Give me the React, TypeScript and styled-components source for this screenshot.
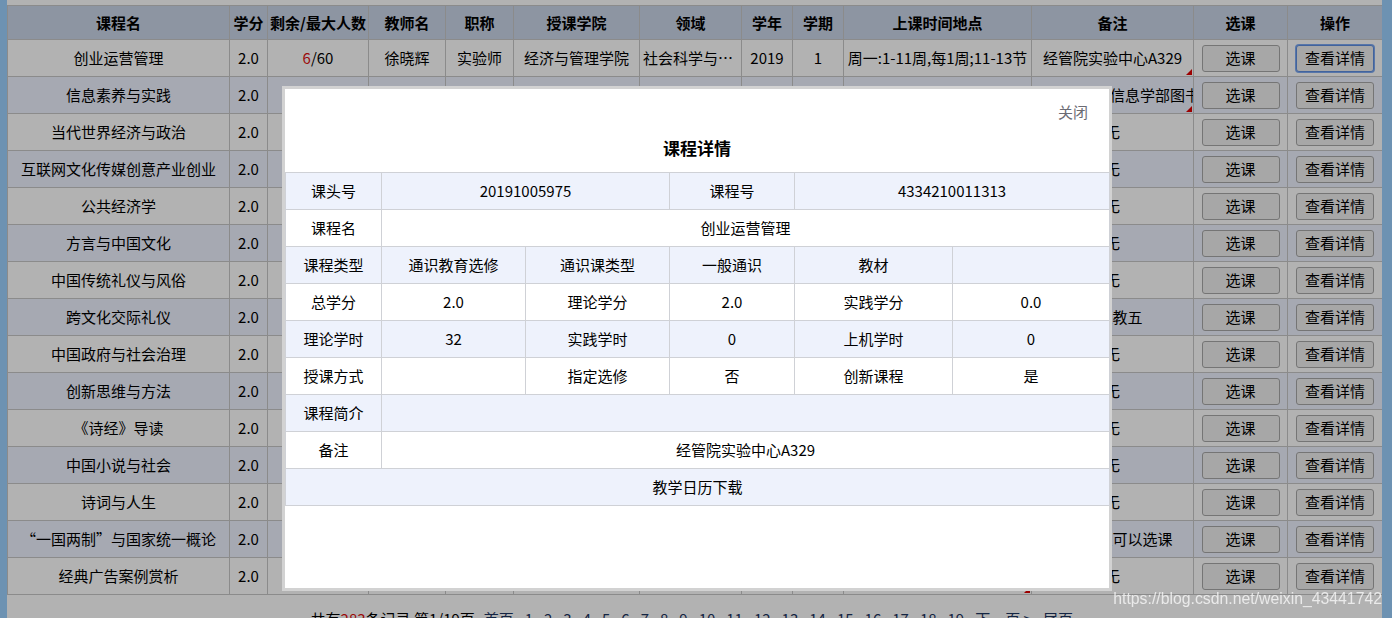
import styled, { createGlobalStyle } from "styled-components"

interface ICourse {
  name: string
  credit: string
  left: string
  max: string
  teacher: string
  title: string
  college: string
  field: string
  year: string
  term: string
  time: string
  note: string
  noteMark?: boolean
  timeMark?: boolean
}

const GlobalStyle = createGlobalStyle`
  html, body {
    margin: 0;
    padding: 0;
    background: #fff;
    overflow: hidden;
  }
  body {
    font-family: "Noto Sans CJK SC", "Microsoft YaHei", sans-serif;
    font-size: 15px;
    color: #000;
  }
`

const Page = styled.div`
  display: flex;
  width: 1392px;
  min-height: 618px;
`

const Strip = styled.div<{ $w: number }>`
  flex: none;
  width: ${p => p.$w}px;
  background: #9dd1ff;
`

const Main = styled.main`
  flex: none;
  width: 1375px;
  padding-top: 5px;
  background: #fff;
`

const CourseTable = styled.table`
  width: 1375px;
  table-layout: fixed;
  border-collapse: collapse;
  border: 1px solid #c8c8c8;
`

const HeadCell = styled.th`
  height: 33px;
  padding: 0 2px;
  background: #cbd6e8;
  border: 1px solid #c8c8c8;
  font-weight: 700;
  font-size: 15px;
  line-height: 20px;
  white-space: nowrap;
  overflow: hidden;
`

const Row = styled.tr<{ $alt: boolean }>`
  background: ${p => (p.$alt ? "#eef2ff" : "#ffffff")};
`

const Cell = styled.td<{ $clip?: boolean }>`
  position: relative;
  height: 36px;
  padding: 0 3px;
  border: 1px solid #c8c8c8;
  text-align: center;
  line-height: 20px;
  white-space: nowrap;
  overflow: hidden;
  text-overflow: ${p => (p.$clip ? "clip" : "ellipsis")};
`

const Red = styled.span`
  color: #e01010;
`

const Mark = styled.i`
  position: absolute;
  right: 1px;
  bottom: 1px;
  width: 0;
  height: 0;
  border-left: 6px solid transparent;
  border-bottom: 6px solid #e00000;
`

const Button = styled.button<{ $focus?: boolean }>`
  width: 78px;
  height: 27px;
  padding: 0;
  border: 1px solid ${p => (p.$focus ? "#5f8fe0" : "#a8a8a8")};
  border-radius: 3px;
  background: #f0f0f0;
  box-shadow: ${p => (p.$focus ? "0 0 0 1px #7eaaf2" : "none")};
  font-family: inherit;
  font-size: 15px;
  line-height: 20px;
  color: #000;
`

const Pager = styled.div`
  padding-top: 14px;
  text-align: center;
  font-size: 15px;
  line-height: 20px;
  white-space: nowrap;
`

const PageLink = styled.a`
  margin: 0 5.5px;
  color: #1e3561;
  text-decoration: none;
`

const Backdrop = styled.div`
  position: fixed;
  inset: 0;
  background: rgba(0, 0, 0, 0.3);
`

const Dialog = styled.div`
  position: fixed;
  left: 282px;
  top: 86px;
  width: 824px;
  height: 499px;
  border: 3px solid #d2d2d2;
  background: #fff;
`

const CloseRow = styled.div`
  padding: 14px 21px 0;
  text-align: right;
  line-height: 18px;
  font-size: 15px;
  color: #6b6b73;
`

const DialogTitle = styled.h2`
  margin: 15px 0 12px;
  text-align: center;
  font-size: 17px;
  font-weight: 700;
  line-height: 24px;
`

const DetailTable = styled.table`
  width: 824px;
  table-layout: fixed;
  border-collapse: collapse;
  border: 1px solid #cfd1d6;
`

const DetailRow = styled.tr<{ $alt: boolean }>`
  background: ${p => (p.$alt ? "#eef2fc" : "#ffffff")};
`

const DetailCell = styled.td`
  height: 36px;
  padding: 0 4px;
  border: 1px solid #cfd1d6;
  text-align: center;
  line-height: 20px;
  font-size: 15px;
  white-space: nowrap;
`

const Watermark = styled.div`
  position: fixed;
  right: 10px;
  top: 590px;
  font-family: "Liberation Sans", Arial, sans-serif;
  font-size: 15.8px;
  line-height: 18px;
  color: rgba(255, 255, 255, 0.72);
`

const colWidths = [222, 38, 101, 77, 68, 126, 102, 51, 51, 188, 162, 94, 95]
const heads = ["课程名", "学分", "剩余/最大人数", "教师名", "职称", "授课学院", "领域", "学年", "学期", "上课时间地点", "备注", "选课", "操作"]

const c = (name: string, left: string, teacher: string, title: string, college: string, field: string, time: string, note: string, extra: Partial<ICourse> = {}): ICourse => ({
  name, credit: "2.0", left, max: "60", teacher, title, college, field, year: "2019", term: "1", time, note, ...extra,
})

const courses: ICourse[] = [
  c("创业运营管理", "6", "徐晓辉", "实验师", "经济与管理学院", "社会科学与经济管理", "周一:1-11周,每1周;11-13节", "经管院实验中心A329", { noteMark: true }),
  c("信息素养与实践", "12", "王丽", "副研究馆员", "图书馆", "科学精神与科技进步", "周二:1-11周,每1周;11-13节", "限理工类、信息学部图书馆上课", { noteMark: true }),
  c("当代世界经济与政治", "3", "李明", "副教授", "马克思主义学院", "社会科学与经济管理", "周三:1-11周,每1周;11-13节", "无"),
  c("互联网文化传媒创意产业创业", "8", "张伟", "讲师", "文法学部", "创新创业与职业发展", "周四:1-11周,每1周;11-13节", "无"),
  c("公共经济学", "15", "刘洋", "副教授", "经济与管理学院", "社会科学与经济管理", "周一:1-11周,每1周;11-13节", "无"),
  c("方言与中国文化", "2", "陈静", "教授", "文法学部", "中华文化与世界文明", "周二:1-11周,每1周;11-13节", "无"),
  c("中国传统礼仪与风俗", "21", "杨帆", "讲师", "文法学部", "中华文化与世界文明", "周三:1-11周,每1周;11-13节", "无"),
  c("跨文化交际礼仪", "9", "赵敏", "讲师", "外国语学院", "中华文化与世界文明", "周四:1-11周,每1周;11-13节", "南区教五"),
  c("中国政府与社会治理", "5", "黄磊", "副教授", "文法学部", "社会科学与经济管理", "周一:1-11周,每1周;11-13节", "无"),
  c("创新思维与方法", "17", "周涛", "教授", "经济与管理学院", "创新创业与职业发展", "周二:1-11周,每1周;11-13节", "无"),
  c("《诗经》导读", "4", "吴芳", "副教授", "文法学部", "文学修养与艺术鉴赏", "周三:1-11周,每1周;11-13节", "无"),
  c("中国小说与社会", "11", "郑丹", "讲师", "文法学部", "文学修养与艺术鉴赏", "周四:1-11周,每1周;11-13节", "无"),
  c("诗词与人生", "0", "孙丽", "教授", "文法学部", "文学修养与艺术鉴赏", "周一:1-11周,每1周;11-13节", "无"),
  c("“一国两制”与国家统一概论", "7", "马骏", "副教授", "马克思主义学院", "社会科学与经济管理", "周二:1-11周,每1周;11-13节", "大一学生可以选课"),
  c("经典广告案例赏析", "13", "何婷", "讲师", "艺术设计学院", "文学修养与艺术鉴赏", "周三:1-11周,每1周;11-13节", "无", { timeMark: true }),
]

const pages = Array.from({ length: 19 }, (_, i) => i + 1)

function Detail() {
  return (
    <>
      <Backdrop />
      <Dialog>
        <CloseRow>关闭</CloseRow>
        <DialogTitle>课程详情</DialogTitle>
        <DetailTable>
          <colgroup>
            {[96, 144, 144, 125, 158, 157].map((w, i) => <col key={i} style={{ width: w }} />)}
          </colgroup>
          <tbody>
            <DetailRow $alt>
              <DetailCell>课头号</DetailCell>
              <DetailCell colSpan={2}>20191005975</DetailCell>
              <DetailCell>课程号</DetailCell>
              <DetailCell colSpan={2}>4334210011313</DetailCell>
            </DetailRow>
            <DetailRow $alt={false}>
              <DetailCell>课程名</DetailCell>
              <DetailCell colSpan={5}>创业运营管理</DetailCell>
            </DetailRow>
            <DetailRow $alt>
              <DetailCell>课程类型</DetailCell>
              <DetailCell>通识教育选修</DetailCell>
              <DetailCell>通识课类型</DetailCell>
              <DetailCell>一般通识</DetailCell>
              <DetailCell>教材</DetailCell>
              <DetailCell></DetailCell>
            </DetailRow>
            <DetailRow $alt={false}>
              <DetailCell>总学分</DetailCell>
              <DetailCell>2.0</DetailCell>
              <DetailCell>理论学分</DetailCell>
              <DetailCell>2.0</DetailCell>
              <DetailCell>实践学分</DetailCell>
              <DetailCell>0.0</DetailCell>
            </DetailRow>
            <DetailRow $alt>
              <DetailCell>理论学时</DetailCell>
              <DetailCell>32</DetailCell>
              <DetailCell>实践学时</DetailCell>
              <DetailCell>0</DetailCell>
              <DetailCell>上机学时</DetailCell>
              <DetailCell>0</DetailCell>
            </DetailRow>
            <DetailRow $alt={false}>
              <DetailCell>授课方式</DetailCell>
              <DetailCell></DetailCell>
              <DetailCell>指定选修</DetailCell>
              <DetailCell>否</DetailCell>
              <DetailCell>创新课程</DetailCell>
              <DetailCell>是</DetailCell>
            </DetailRow>
            <DetailRow $alt>
              <DetailCell>课程简介</DetailCell>
              <DetailCell colSpan={5}></DetailCell>
            </DetailRow>
            <DetailRow $alt={false}>
              <DetailCell>备注</DetailCell>
              <DetailCell colSpan={5}>经管院实验中心A329</DetailCell>
            </DetailRow>
            <DetailRow $alt>
              <DetailCell colSpan={6}>教学日历下载</DetailCell>
            </DetailRow>
          </tbody>
        </DetailTable>
      </Dialog>
    </>
  )
}

export default function App() {
  return (
    <>
      <GlobalStyle />
      <Page>
        <Strip $w={7} />
        <Main>
          <CourseTable>
            <colgroup>
              {colWidths.map((w, i) => <col key={i} style={{ width: w }} />)}
            </colgroup>
            <thead>
              <tr>
                {heads.map(h => <HeadCell key={h}>{h}</HeadCell>)}
              </tr>
            </thead>
            <tbody>
              {courses.map((course, i) => (
                <Row key={course.name} $alt={i % 2 === 1}>
                  <Cell>{course.name}</Cell>
                  <Cell>{course.credit}</Cell>
                  <Cell><Red>{course.left}</Red>/{course.max}</Cell>
                  <Cell>{course.teacher}</Cell>
                  <Cell>{course.title}</Cell>
                  <Cell>{course.college}</Cell>
                  <Cell>{course.field}</Cell>
                  <Cell>{course.year}</Cell>
                  <Cell>{course.term}</Cell>
                  <Cell $clip>{course.time}{course.timeMark && <Mark />}</Cell>
                  <Cell $clip>{course.note}{course.noteMark && <Mark />}</Cell>
                  <Cell><Button>选课</Button></Cell>
                  <Cell><Button $focus={i === 0}>查看详情</Button></Cell>
                </Row>
              ))}
            </tbody>
          </CourseTable>
          <Pager>
            共有<Red>283</Red>条记录 第1/19页 <PageLink>首页</PageLink>
            {pages.map(n => <PageLink key={n}>{n}</PageLink>)}
            <PageLink>下一页 &gt;</PageLink>
            <PageLink>尾页</PageLink>
          </Pager>
        </Main>
        <Strip $w={10} />
      </Page>
      <Detail />
      <Watermark>https://blog.csdn.net/weixin_43441742</Watermark>
    </>
  )
}
